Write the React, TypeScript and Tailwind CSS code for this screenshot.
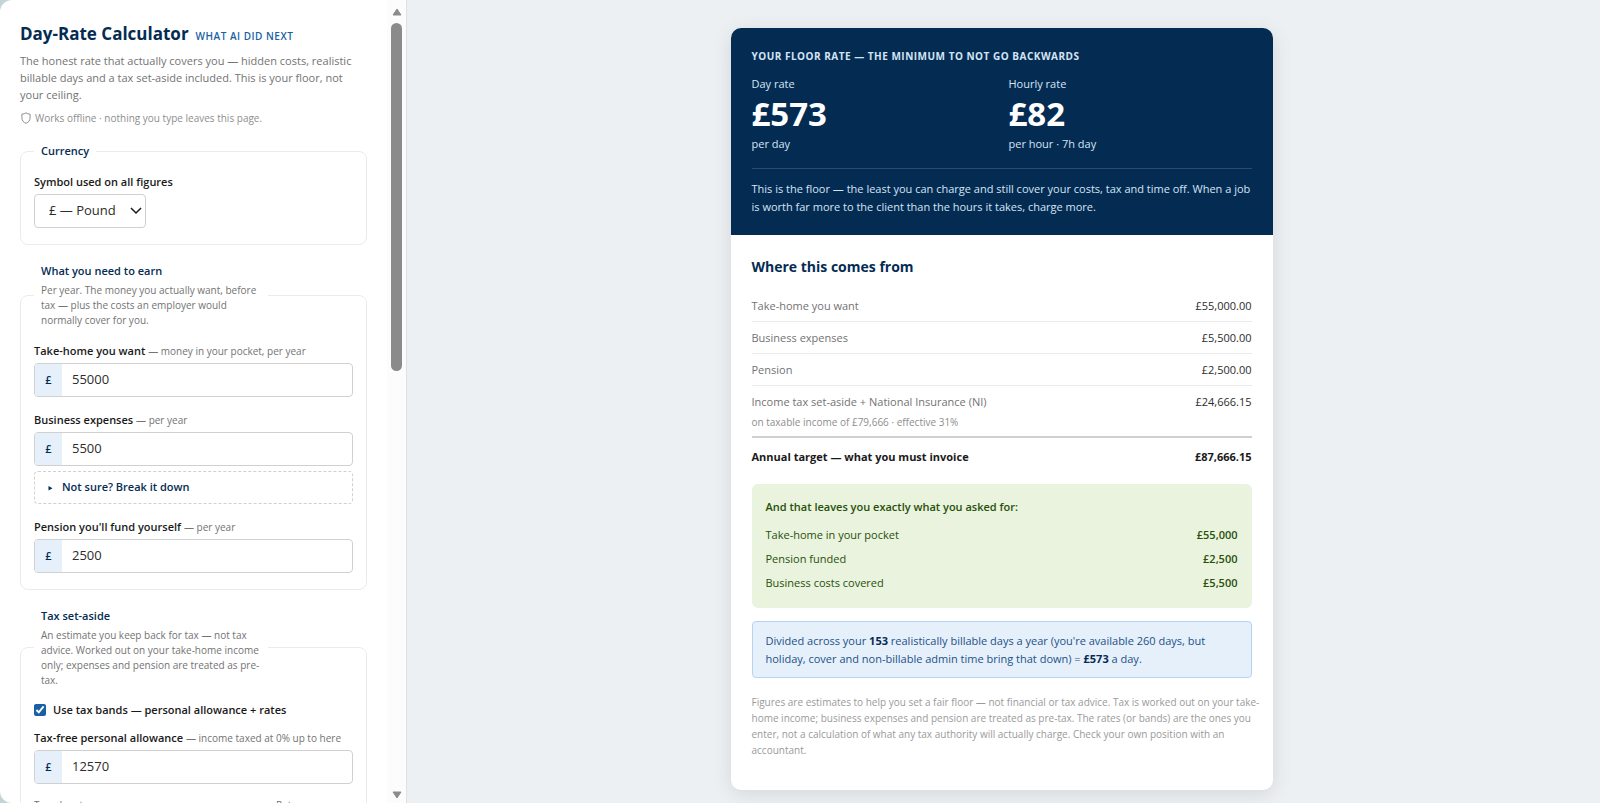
import { useState } from 'react';

const breakdown = [
  { label: 'Take-home you want', value: '£55,000.00' },
  { label: 'Business expenses', value: '£5,500.00' },
  { label: 'Pension', value: '£2,500.00' },
];

const leftovers = [
  { label: 'Take-home in your pocket', value: '£55,000' },
  { label: 'Pension funded', value: '£2,500' },
  { label: 'Business costs covered', value: '£5,500' },
];

function MoneyField({ id, label, hint, initial }: { id: string; label: string; hint: string; initial: string }) {
  const [value, setValue] = useState(initial);

  return (
    <div>
      <label htmlFor={id} className="block h-5 whitespace-nowrap text-[11px] leading-5 font-semibold text-[#1a1a1a]">
        {label} <span className="text-[10px] font-normal text-[#737373]">— {hint}</span>
      </label>
      <div className="mt-[2px] flex h-[34px] overflow-hidden rounded border border-[#d0d0d0] bg-white">
        <span className="flex w-[27px] items-center justify-center bg-[#e6f0fb] text-[11px] font-semibold text-[#042c53]">£</span>
        <input
          id={id}
          type="text"
          inputMode="numeric"
          value={value}
          onChange={(e) => setValue(e.target.value)}
          className="min-w-0 flex-1 px-[10px] text-[13px] text-[#2c2c2a] outline-none"
        />
      </div>
    </div>
  );
}

export default function App() {
  const [symbol, setSymbol] = useState('£');
  const [useBands, setUseBands] = useState(true);

  return (
    <div className="flex h-screen overflow-hidden bg-[#c3d3d8] font-['Open_Sans',sans-serif] text-[#2c2c2a]">
      <div className="flex w-[407px] shrink-0 overflow-hidden rounded-l-xl border-r border-[#dfe1e4] bg-white">
        <aside className="min-w-0 flex-1 overflow-hidden px-5 pt-5">
          <header>
            <div className="flex items-baseline gap-[7px] whitespace-nowrap">
              <h1 className="text-[17px] leading-7 font-bold text-[#042c53]">Day-Rate Calculator</h1>
              <span className="text-[10px] font-semibold tracking-wider text-[#185fa5] uppercase">What AI did next</span>
            </div>
            <p className="mt-1 text-[11px] leading-[17px] text-[#737373]">
              The honest rate that actually covers you — hidden costs, realistic billable days and a tax set-aside included. This is your floor, not your ceiling.
            </p>
            <p className="mt-[7px] flex items-center gap-[3px] text-[10px] leading-4 text-[#8e8e8e]">
              <svg viewBox="0 0 12 12" className="size-3" fill="none" stroke="currentColor" strokeWidth="1">
                <path d="M6 0.8 C4.9 1.7 3.5 2.1 1.9 2.2 V5.8 C1.9 8.5 3.6 10.4 6 11.3 C8.4 10.4 10.1 8.5 10.1 5.8 V2.2 C8.5 2.1 7.1 1.7 6 0.8 Z" />
              </svg>
              Works offline · nothing you type leaves this page.
            </p>
          </header>

          <fieldset className="mt-[15px] min-w-0 rounded-lg border border-[#ebebeb] px-[13px] pb-4">
            <legend className="px-[7px] text-[11px] leading-5 font-semibold text-[#042c53]">Currency</legend>
            <label htmlFor="symbol" className="mt-[11px] block text-[11px] leading-5 font-semibold text-[#1a1a1a]">Symbol used on all figures</label>
            <div className="relative mt-[2px] w-28">
              <select
                id="symbol"
                value={symbol}
                onChange={(e) => setSymbol(e.target.value)}
                className="block h-[34px] w-full appearance-none rounded border border-[#d0d0d0] bg-white px-[14px] text-[13px] text-[#2c2c2a]"
              >
                <option value="£">£ — Pound</option>
                <option value="$">$ — Dollar</option>
                <option value="€">€ — Euro</option>
              </select>
              <svg viewBox="0 0 12 8" className="pointer-events-none absolute top-[13px] right-1 h-2 w-3" fill="none" stroke="#1a1a1a" strokeWidth="1.5">
                <path d="M1 1 L6 6 L11 1" />
              </svg>
            </div>
          </fieldset>

          <fieldset className="mt-4 min-w-0 rounded-lg border border-[#ebebeb] px-[13px] pb-4">
            <legend className="w-[234px] px-[7px] pb-px text-[11px] leading-5 font-semibold text-[#042c53]">
              What you need to earn
              <span className="mt-[2px] block text-[10px] leading-[15px] font-normal text-[#737373]">
                Per year. The money you actually want, before tax — plus the costs an employer would normally cover for you.
              </span>
            </legend>
            <div className="mt-3 flex flex-col gap-[13px]">
              <MoneyField id="take-home" label="Take-home you want" hint="money in your pocket, per year" initial="55000" />
              <div>
                <MoneyField id="expenses" label="Business expenses" hint="per year" initial="5500" />
                <button type="button" className="mt-[5px] flex h-[33px] w-full items-center gap-[7px] rounded border border-dashed border-[#d0d0d0] px-3 text-[11px] font-semibold text-[#042c53]">
                  <svg viewBox="0 0 8 8" className="size-2" fill="currentColor">
                    <path d="M1.5 2 L5.5 4.2 L1.5 6.4 Z" />
                  </svg>
                  Not sure? Break it down
                </button>
              </div>
              <MoneyField id="pension" label="Pension you'll fund yourself" hint="per year" initial="2500" />
            </div>
          </fieldset>

          <fieldset className="mt-4 min-w-0 rounded-lg border border-[#ebebeb] px-[13px] pb-4">
            <legend className="w-[234px] px-[7px] pb-px text-[11px] leading-5 font-semibold text-[#042c53]">
              Tax set-aside
              <span className="mt-[2px] block text-[10px] leading-[15px] font-normal text-[#737373]">
                An estimate you keep back for tax — not tax advice. Worked out on your take-home income only; expenses and pension are treated as pre-tax.
              </span>
            </legend>
            <label className="mt-[11px] flex items-center gap-[7px] text-[11px] leading-5 font-semibold text-[#1a1a1a]">
              <input
                type="checkbox"
                checked={useBands}
                onChange={(e) => setUseBands(e.target.checked)}
                className="size-3 accent-[#185fa5]"
              />
              Use tax bands — personal allowance + rates
            </label>
            <div className="mt-2">
              <MoneyField id="allowance" label="Tax-free personal allowance" hint="income taxed at 0% up to here" initial="12570" />
            </div>
            <div className="mt-[13px] grid grid-cols-[242px_1fr] text-[10px] leading-4 text-[#737373]">
              <span>Taxed up to</span>
              <span>Rate</span>
            </div>
          </fieldset>
        </aside>

        <div className="flex w-[19px] flex-col items-center justify-between bg-[#fcfcfc] pt-2 pb-1 text-[#8b8b8b]">
          <svg viewBox="0 0 10 8" className="h-2 w-[10px]" fill="currentColor" stroke="currentColor" strokeLinejoin="round">
            <path d="M5 1 L9 7 H1 Z" />
          </svg>
          <div className="mt-[7px] h-[348px] w-[11px] rounded-full bg-[#8b8b8b]" />
          <div className="flex-1" />
          <svg viewBox="0 0 10 8" className="h-2 w-[10px]" fill="currentColor" stroke="currentColor" strokeLinejoin="round">
            <path d="M5 7 L9 1 H1 Z" />
          </svg>
        </div>
      </div>

      <main className="flex-1 bg-[#ecf0f3] py-7 pr-8 pl-7">
        <article className="mx-auto max-w-[542px] overflow-hidden rounded-[10px] bg-white shadow-[0_4px_20px_rgba(0,0,0,0.1)]">
          <section className="bg-[#042c53] px-[21px] pt-5 pb-[19px] text-[#d4e4f5]">
            <h2 className="text-[10px] leading-4 font-bold tracking-wider uppercase">Your floor rate — the minimum to not go backwards</h2>
            <div className="mt-[10px] grid grid-cols-2 gap-[14px] text-[11px] leading-5">
              <div>
                <p>Day rate</p>
                <p className="text-[33px] leading-10 font-bold text-white">£573</p>
                <p>per day</p>
              </div>
              <div>
                <p>Hourly rate</p>
                <p className="text-[33px] leading-10 font-bold text-white">£82</p>
                <p>per hour · 7h day</p>
              </div>
            </div>
            <p className="mt-[14px] border-t border-white/15 pt-[11px] text-[11px] leading-[18px]">
              This is the floor — the least you can charge and still cover your costs, tax and time off. When a job is worth far more to the client than the hours it takes, charge more.
            </p>
          </section>

          <section className="px-[21px] pt-5 pb-8">
            <h2 className="text-[14px] leading-6 font-bold text-[#042c53]">Where this comes from</h2>
            <table className="mt-[11px] w-full text-[11px] leading-5">
              <tbody>
                {breakdown.map((row) => (
                  <tr key={row.label} className="border-b border-[#ebebeb]">
                    <th scope="row" className="pt-[6px] pb-[5px] text-left font-normal text-[#737373]">{row.label}</th>
                    <td className="pt-[6px] pb-[5px] text-right">{row.value}</td>
                  </tr>
                ))}
                <tr className="border-b-2 border-[#d0d0d0]">
                  <th scope="row" className="pt-[6px] pb-1 text-left font-normal text-[#737373]">
                    Income tax set-aside + National Insurance (NI)
                    <span className="block text-[10px] leading-5 text-[#8e8e8e]">on taxable income of £79,666 · effective 31%</span>
                  </th>
                  <td className="pt-[6px] pb-1 text-right align-top">£24,666.15</td>
                </tr>
                <tr className="font-bold text-[#1a1a1a]">
                  <th scope="row" className="py-[9px] text-left">Annual target — what you must invoice</th>
                  <td className="py-[9px] text-right">£87,666.15</td>
                </tr>
              </tbody>
            </table>

            <div className="mt-2 rounded-md bg-[#eaf3de] px-[14px] py-[13px] text-[11px] leading-5 text-[#27500a]">
              <h3 className="font-semibold">And that leaves you exactly what you asked for:</h3>
              <dl className="mt-[6px]">
                {leftovers.map((row) => (
                  <div key={row.label} className="flex h-6 items-center justify-between">
                    <dt>{row.label}</dt>
                    <dd className="font-semibold">{row.value}</dd>
                  </div>
                ))}
              </dl>
            </div>

            <p className="mt-[13px] rounded border border-[#b5d4f4] bg-[#e6f0fb] px-[13px] pt-[10px] pb-[9px] text-[11px] leading-[18px] text-[#1b5088]">
              Divided across your <strong className="text-[#042c53]">153</strong> realistically billable days a year (you're available 260 days, but holiday, cover and non-billable admin time bring that down) = <strong className="text-[#042c53]">£573</strong> a day.
            </p>

            <p className="mt-4 -mr-4 text-[10px] leading-4 text-[#9a9a9a]">
              Figures are estimates to help you set a fair floor — not financial or tax advice. Tax is worked out on your take-home income; business expenses and pension are treated as pre-tax. The rates (or bands) are the ones you enter, not a calculation of what any tax authority will actually charge. Check your own position with an accountant.
            </p>
          </section>
        </article>
      </main>
    </div>
  );
}
